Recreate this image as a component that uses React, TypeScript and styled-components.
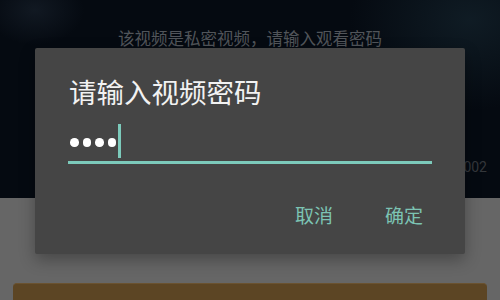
import React from 'react'
import styled, { createGlobalStyle } from 'styled-components'

const GlobalStyle = createGlobalStyle`
  html, body {
    margin: 0;
    padding: 0;
    width: 500px;
    height: 300px;
    overflow: hidden;
    background: #676767;
    font-family: 'Noto Sans CJK SC', 'Noto Sans', sans-serif;
  }
`

const S = {
  Page: styled.div`
    position: relative;
    width: 500px;
    height: 300px;
    display: flex;
    flex-direction: column;
    background: #666666;
  `,
  Video: styled.div`
    height: 198px;
    flex: none;
    display: flex;
    flex-direction: column;
    align-items: center;
    padding-top: 27px;
    box-sizing: border-box;
    background:
      radial-gradient(ellipse 70px 50px at 35px 10px, rgba(40, 52, 66, 0.35), transparent 70%),
      radial-gradient(ellipse 160px 120px at 470px 20px, rgba(24, 42, 52, 0.55), transparent 75%),
      #050a11;
  `,
  Hint: styled.div`
    font-size: 16.5px;
    line-height: 22px;
    color: #51555a;
    letter-spacing: 0;
  `,
  Meta: styled.div`
    align-self: flex-end;
    margin-top: 110px;
    margin-right: 13px;
    font-family: 'Roboto', sans-serif;
    font-size: 14px;
    color: #34373b;
  `,
  Body: styled.div`
    flex: 1;
    display: flex;
    flex-direction: column;
    padding: 85px 13px 0;
  `,
  BuyButton: styled.div`
    flex: 1;
    background: #5c4524;
    border-radius: 4px 4px 0 0;
    border-top: 1px solid #6a5230;
  `,
  Dialog: styled.div`
    position: absolute;
    left: 35px;
    top: 48px;
    width: 430px;
    height: 206px;
    box-sizing: border-box;
    background: #454545;
    border-radius: 2px;
    box-shadow: 0 6px 16px rgba(0, 0, 0, 0.3);
    padding: 26px 33px 0;
    display: flex;
    flex-direction: column;
  `,
  Title: styled.div`
    font-size: 27.5px;
    line-height: 34px;
    color: #f2f2f2;
    padding-left: 1px;
  `,
  Field: styled.div`
    margin-top: 16px;
    height: 37px;
    display: flex;
    align-items: center;
    gap: 4px;
    padding-left: 2px;
    border-bottom: 3px solid #7ccabb;
  `,
  Dot: styled.span`
    width: 8.5px;
    height: 8.5px;
    border-radius: 50%;
    background: #ffffff;
  `,
  Caret: styled.span`
    width: 2.5px;
    height: 34px;
    margin-left: -2px;
    background: #7ccabb;
    align-self: flex-end;
    margin-bottom: 3px;
  `,
  Actions: styled.div`
    margin-top: 39px;
    display: flex;
    justify-content: flex-end;
    gap: 52px;
    padding-right: 9px;
  `,
  Action: styled.span`
    font-size: 19px;
    line-height: 24px;
    color: #7cc3b3;
  `
}

export default function App() {
  return (
    <>
      <GlobalStyle />
      <S.Page>
        <S.Video>
          <S.Hint>该视频是私密视频，请输入观看密码</S.Hint>
          <S.Meta>播放 1002</S.Meta>
        </S.Video>
        <S.Body>
          <S.BuyButton />
        </S.Body>
        <S.Dialog>
          <S.Title>请输入视频密码</S.Title>
          <S.Field>
            <S.Dot />
            <S.Dot />
            <S.Dot />
            <S.Dot />
            <S.Caret />
          </S.Field>
          <S.Actions>
            <S.Action>取消</S.Action>
            <S.Action>确定</S.Action>
          </S.Actions>
        </S.Dialog>
      </S.Page>
    </>
  )
}
